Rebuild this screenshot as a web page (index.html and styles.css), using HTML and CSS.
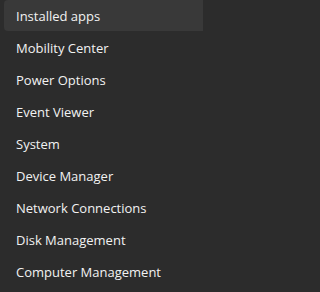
FILE: index.html
```html
<!DOCTYPE html>
<html lang="en">
<head>
<meta charset="utf-8">
<title>Quick Link Menu</title>
<link rel="stylesheet" href="styles.css">
</head>
<body>
<ul class="menu">
  <li class="item item-active">Installed apps</li>
  <li class="item">Mobility Center</li>
  <li class="item">Power Options</li>
  <li class="item">Event Viewer</li>
  <li class="item">System</li>
  <li class="item">Device Manager</li>
  <li class="item">Network Connections</li>
  <li class="item">Disk Management</li>
  <li class="item">Computer Management</li>
</ul>
</body>
</html>
```
FILE: styles.css
```css
html {
  overflow: hidden;
  background: #2c2c2c;
}
body {
  margin: 0;
  width: 203px;
  overflow: hidden;
  background: #2c2c2c;
  font-family: "Open Sans", "Noto Sans", sans-serif;
  font-size: 13px;
  color: #f2f2f2;
}
.menu {
  list-style: none;
  width: 212px;
  margin: 0;
  padding: 0;
  display: flex;
  flex-direction: column;
}
.item {
  height: 32px;
  line-height: 33px;
  margin-left: 4px;
  padding-left: 12px;
  border-radius: 4px;
  white-space: nowrap;
}
.item-active {
  background: #393939;
  height: 31px;
  margin-bottom: 1px;
}
```
